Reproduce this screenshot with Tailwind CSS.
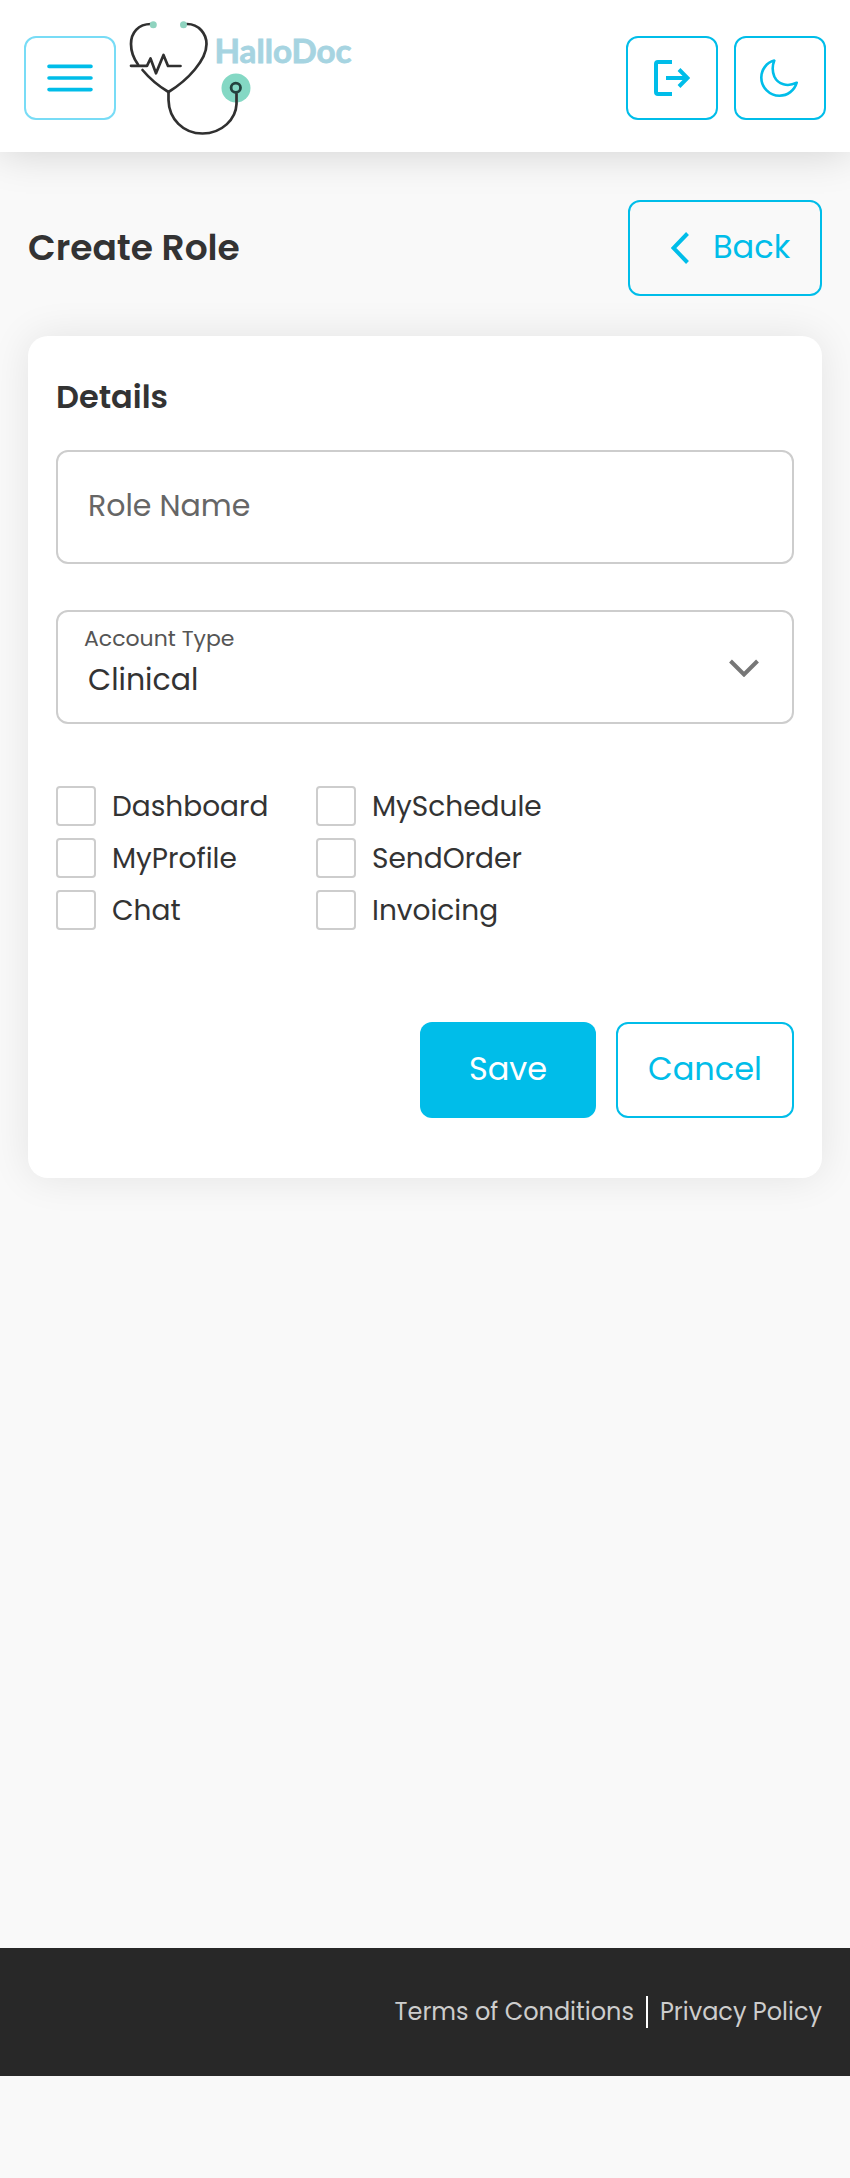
<!DOCTYPE html>
<html lang="en">
<head>
<meta charset="utf-8">
<title>HalloDoc - Create Role</title>
<script src="https://cdn.jsdelivr.net/npm/@tailwindcss/browser@4"></script>
</head>
<body class="bg-[#f9f9f9] font-[Poppins,Inter,sans-serif] text-[#333] min-h-[2178px] flex flex-col">
<header class="h-[152px] shrink-0 bg-white flex items-start px-6 shadow-[0_0_40px_rgba(0,0,0,0.17)]">
  <button class="mt-9 w-[92px] h-[84px] rounded-xl border-2 border-[#78dcf6] flex items-center justify-center" aria-label="Menu">
    <svg width="46" height="28" viewBox="0 0 46 28" fill="none" stroke="#00bde9" stroke-width="3.6" stroke-linecap="round"><path d="M2 2.4h42M2 14h42M2 25.6h42"/></svg>
  </button>
  <svg class="ml-2" width="240" height="152" viewBox="124 0 240 152" fill="none">
    <circle cx="236" cy="88" r="14.5" fill="#84d8c4"/>
    <g stroke="#303030" stroke-width="2.7" stroke-linecap="round" stroke-linejoin="round">
      <path d="M151 24C138 24 131 33 131 44C131 52 134 59 138 64.5"/>
      <path d="M142.5 70C150 79 160 87 168.500 92C188 80 206.500 60 206.500 44C206.500 34 199 24 187 24"/>
      <path d="M168.500 92V100C169 119 183 133.500 202.500 133.500C222 133.500 236 119 236.500 104V94"/>
      <path d="M131 65.800H147L150.500 58.500L156 73.300L163.500 55L168 66H180.500"/>
    </g>
    <circle cx="235.800" cy="87.800" r="4.700" stroke="#24423e" stroke-width="2.800"/>
    <circle cx="153.300" cy="24.800" r="3.500" fill="#8fd3bf"/>
    <circle cx="183.500" cy="24.800" r="3.500" fill="#8fd3bf"/>
    <text x="214.500" y="62.500" textLength="137" lengthAdjust="spacingAndGlyphs" font-family="Lato, sans-serif" font-weight="700" font-size="31.500" fill="#a6d4e1" stroke="#a6d4e1" stroke-width="0.8">HalloDoc</text>
  </svg>
  <div class="ml-auto mt-9 flex gap-4">
    <button class="w-[92px] h-[84px] rounded-xl border-2 border-[#00bde9] flex items-center justify-center" aria-label="Log out">
      <svg width="36" height="36" viewBox="0 0 36 36" fill="none" stroke="#00bde9" stroke-width="4"><path d="M18 2H4Q2 2 2 4V32Q2 34 4 34H18M12 18H34M25 9.500L33.500 18L25 26.500"/></svg>
    </button>
    <button class="w-[92px] h-[84px] rounded-xl border-2 border-[#00bde9] flex items-center justify-center" aria-label="Dark mode">
      <svg class="-ml-0.5" width="38" height="38" viewBox="0 0 38 38" fill="none" stroke="#00bde9" stroke-width="2.600" stroke-linejoin="round"><path d="M14.300 1.600C6.500 3.500 1.300 10.800 1.300 18.500C1.300 28.500 9.500 36.700 19.500 36.700C27.500 36.700 34.500 31.500 36.700 23.700C27.500 28.300 18 25.500 14.300 17.500C12.300 12.500 12.300 6.500 14.300 1.600Z"/></svg>
    </button>
  </div>
</header>
<main class="px-7 pt-12 grow whitespace-nowrap">
  <div class="flex items-center justify-between h-24">
    <h1 class="text-[36px] font-semibold leading-none pb-px">Create Role</h1>
    <button class="w-[194px] h-24 rounded-xl border-2 border-[#00bde9] text-[#00bde9] flex items-center pl-[41px]">
      <svg width="18" height="32" viewBox="0 0 18 32" fill="none" stroke="#00bde9" stroke-width="4"><path d="M16.500 1.500L2.500 16L16.500 30.500"/></svg>
      <span class="ml-6 pb-0.5 text-[32px] leading-none">Back</span>
    </button>
  </div>
  <section class="mt-10 h-[842px] rounded-[20px] bg-white px-7 pt-10 shadow-[0_0_40px_rgba(0,0,0,0.09)]">
    <h2 class="text-[32px] leading-[42px] font-semibold">Details</h2>
    <div class="mt-8 h-[114px] border-2 border-[#cdcdcd] rounded-xl px-[30px] pb-[3px] flex items-center text-[30px] text-[#666]">Role Name</div>
    <div class="mt-[46px] h-[114px] border-2 border-[#cdcdcd] rounded-xl pl-[26px] pr-[33px] flex items-center justify-between">
      <div class="flex flex-col pb-[9px]">
        <span class="text-[22px] leading-[34px] text-[#555]">Account Type</span>
        <span class="text-[30px] leading-[48px] ml-1">Clinical</span>
      </div>
      <svg class="mt-px" width="30" height="18" viewBox="0 0 30 18" fill="none" stroke="#777" stroke-width="4"><path d="M1.500 2L15 15.500L28.500 2"/></svg>
    </div>
    <div class="mt-[62px] grid grid-cols-[260px_auto] gap-y-3 text-[28px] leading-[38px]">
      <label class="flex gap-4 items-end"><i class="size-10 border-2 border-[#cdcdcd] rounded"></i>Dashboard</label>
      <label class="flex gap-4 items-end"><i class="size-10 border-2 border-[#cdcdcd] rounded"></i>MySchedule</label>
      <label class="flex gap-4 items-end"><i class="size-10 border-2 border-[#cdcdcd] rounded"></i>MyProfile</label>
      <label class="flex gap-4 items-end"><i class="size-10 border-2 border-[#cdcdcd] rounded"></i>SendOrder</label>
      <label class="flex gap-4 items-end"><i class="size-10 border-2 border-[#cdcdcd] rounded"></i>Chat</label>
      <label class="flex gap-4 items-end"><i class="size-10 border-2 border-[#cdcdcd] rounded"></i>Invoicing</label>
    </div>
    <div class="mt-[92px] flex justify-end gap-5 text-[32px] leading-none">
      <button class="w-44 h-24 pb-0.5 rounded-xl bg-[#00bde9] text-white">Save</button>
      <button class="w-[178px] h-24 pb-0.5 rounded-xl border-2 border-[#00bde9] text-[#00bde9]">Cancel</button>
    </div>
  </section>
</main>
<footer class="h-32 mb-[102px] shrink-0 bg-[#282828] text-[#cdcdcd] flex items-center justify-end px-7 text-[24px] leading-none whitespace-nowrap">
  <a>Terms of Conditions</a>
  <i class="w-0.5 h-8 bg-white mx-3"></i>
  <a>Privacy Policy</a>
</footer>
</body>
</html>
